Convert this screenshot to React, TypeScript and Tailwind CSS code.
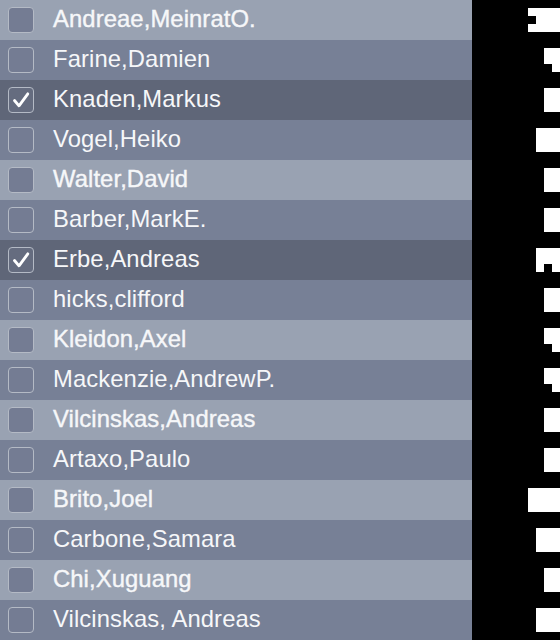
import React from "react";

type Row = { name: string; checked?: boolean; tone: "light" | "mid" | "dark" };

const rows: Row[] = [
  { name: "Andreae,MeinratO.", tone: "light" },
  { name: "Farine,Damien", tone: "mid" },
  { name: "Knaden,Markus", checked: true, tone: "dark" },
  { name: "Vogel,Heiko", tone: "mid" },
  { name: "Walter,David", tone: "light" },
  { name: "Barber,MarkE.", tone: "mid" },
  { name: "Erbe,Andreas", checked: true, tone: "dark" },
  { name: "hicks,clifford", tone: "mid" },
  { name: "Kleidon,Axel", tone: "light" },
  { name: "Mackenzie,AndrewP.", tone: "mid" },
  { name: "Vilcinskas,Andreas", tone: "light" },
  { name: "Artaxo,Paulo", tone: "mid" },
  { name: "Brito,Joel", tone: "light" },
  { name: "Carbone,Samara", tone: "mid" },
  { name: "Chi,Xuguang", tone: "light" },
  { name: "Vilcinskas, Andreas", tone: "mid" },
];

// [x, y, w, h] in the 88x640 right panel
const blocks: [number, number, number, number][] = [
  [56, 8, 32, 8], [64, 16, 24, 8], [56, 24, 32, 8],
  [72, 48, 16, 16], [80, 64, 8, 8],
  [72, 88, 16, 24],
  [64, 128, 24, 24],
  [72, 168, 16, 24],
  [72, 208, 16, 24],
  [64, 248, 24, 16], [64, 264, 8, 8], [80, 264, 8, 8],
  [72, 288, 16, 24],
  [72, 328, 16, 16], [80, 344, 8, 8],
  [72, 368, 16, 16], [80, 384, 8, 8],
  [72, 408, 16, 24],
  [72, 448, 16, 24],
  [56, 488, 32, 24],
  [64, 528, 24, 24],
  [72, 568, 16, 24],
  [64, 608, 24, 24],
];

function Checkbox({ checked }: { checked?: boolean }) {
  return (
    <div
      className={
        "w-[26px] h-[26px] rounded-[4px] border-[1.5px] border-[#b4bac5] flex items-center justify-center shrink-0 " +
        (checked ? "bg-[#656c7f]" : "bg-[#747c93]")
      }
    >
      {checked && (
        <svg width="22" height="22" viewBox="0 0 22 22" fill="none">
          <path
            d="M4.5 11.5 L9 16.8 L17.8 4.8"
            stroke="white"
            strokeWidth="2.8"
            strokeLinecap="round"
            strokeLinejoin="round"
          />
        </svg>
      )}
    </div>
  );
}

export default function App() {
  return (
    <div className="flex w-[560px] h-[640px] overflow-hidden" style={{ fontFamily: '"Liberation Sans", Arial, sans-serif' }}>
      <div className="w-[472px] flex flex-col">
        {rows.map((r, i) => (
          <div
            key={i}
            className={
              "h-10 flex items-center pl-2 gap-[19px] " +
              (r.tone === "light" ? "bg-[#99a2b2]" : r.tone === "dark" ? "bg-[#5f6678]" : "bg-[#778096]")
            }
          >
            <Checkbox checked={r.checked} />
            <span
              className={
                "text-[23.8px] tracking-[0.1px] leading-none mb-[2px] text-[#f6f7f9] whitespace-nowrap " +
                (r.tone === "light" ? "[-webkit-text-stroke:0.4px_#f6f7f9]" : "")
              }
            >
              {r.name}
            </span>
          </div>
        ))}
      </div>
      <div className="flex-1 bg-black">
        <svg width="88" height="640" viewBox="0 0 88 640">
          {blocks.map(([x, y, w, h], i) => (
            <rect key={i} x={x} y={y} width={w} height={h} fill="white" />
          ))}
        </svg>
      </div>
    </div>
  );
}
